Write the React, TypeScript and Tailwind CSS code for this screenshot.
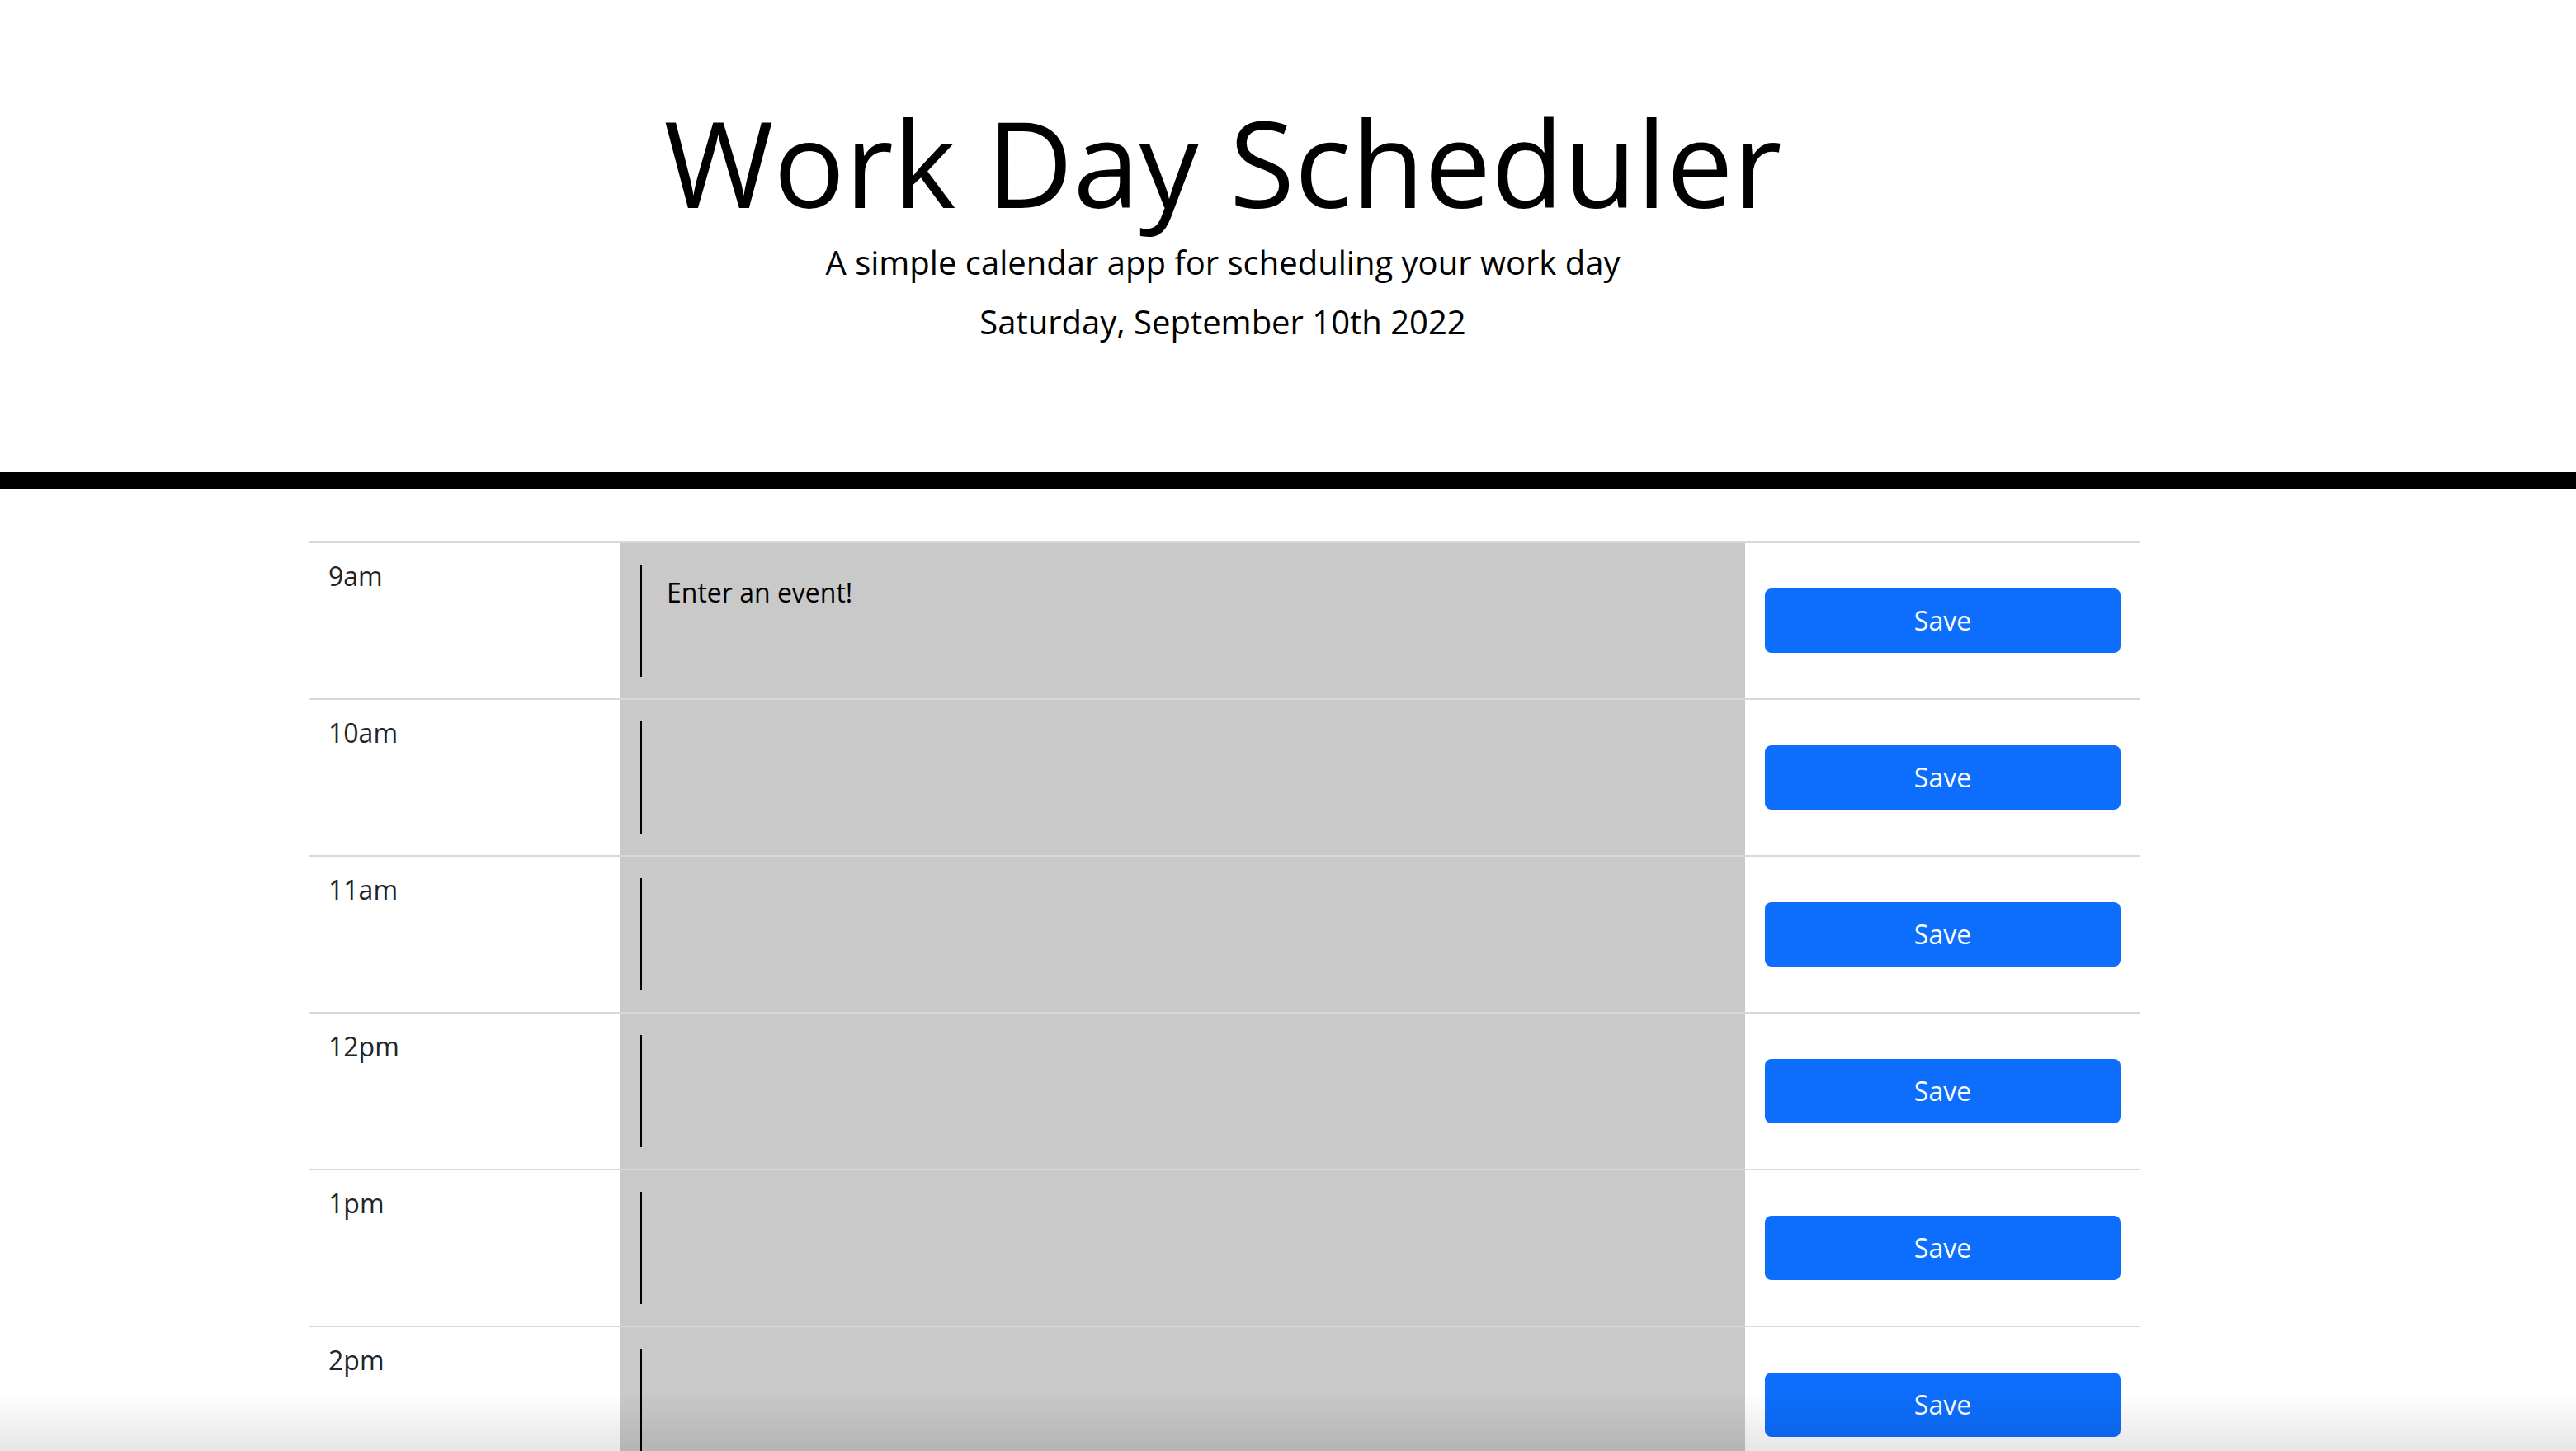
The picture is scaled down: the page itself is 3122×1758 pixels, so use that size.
import { useState } from 'react';

const hours = ['9am', '10am', '11am', '12pm', '1pm', '2pm', '3pm', '4pm', '5pm'];

export default function App() {
  const [events, setEvents] = useState<Record<string, string>>({});

  return (
    <div className="min-h-screen bg-white text-black font-['Open_Sans',sans-serif]">
      <header className="border-b-[20px] border-black">
        <div className="w-[2964px] text-center pt-[110px] pb-[152px]">
          <h1 className="text-[144px] font-normal leading-[1.2]">Work Day Scheduler</h1>
          <p className="text-[40px] leading-[1.5] mt-[5px]">A simple calendar app for scheduling your work day</p>
          <p className="text-[40px] leading-[1.5] mt-[12px]">Saturday, September 10th 2022</p>
        </div>
      </header>

      <main className="ml-[374px] w-[2220px] mt-[64px] pb-[100px]">
        {hours.map((hour, i) => (
          <div key={hour} className="flex h-[190px] border-t-2 border-[#d6d8dc]">
            <div className="w-[378px] pl-[24px] pt-[16px] text-[32px] leading-[1.5] text-[#212529]">{hour}</div>
            <div className="w-[1363px] bg-[#c9c9c9] flex items-center">
              <textarea
                value={events[hour] ?? ''}
                placeholder={i === 0 ? 'Enter an event!' : ''}
                onChange={(e) => setEvents({ ...events, [hour]: e.target.value })}
                className="flex-1 mx-[24px] h-[136px] border-l-2 border-black bg-transparent resize-none outline-none pl-[30px] pt-[10px] text-[32px] leading-[1.5] text-black placeholder:text-black"
              />
            </div>
            <div className="flex-1 flex items-center px-[24px]">
              <button className="w-full h-[78px] rounded-[8px] bg-[#0d6efd] text-white text-[32px] leading-[1.5]">Save</button>
            </div>
          </div>
        ))}
      </main>

      <div className="pointer-events-none fixed left-0 right-0 bottom-0 h-[70px] bg-gradient-to-b from-transparent to-black/10" />
    </div>
  );
}
